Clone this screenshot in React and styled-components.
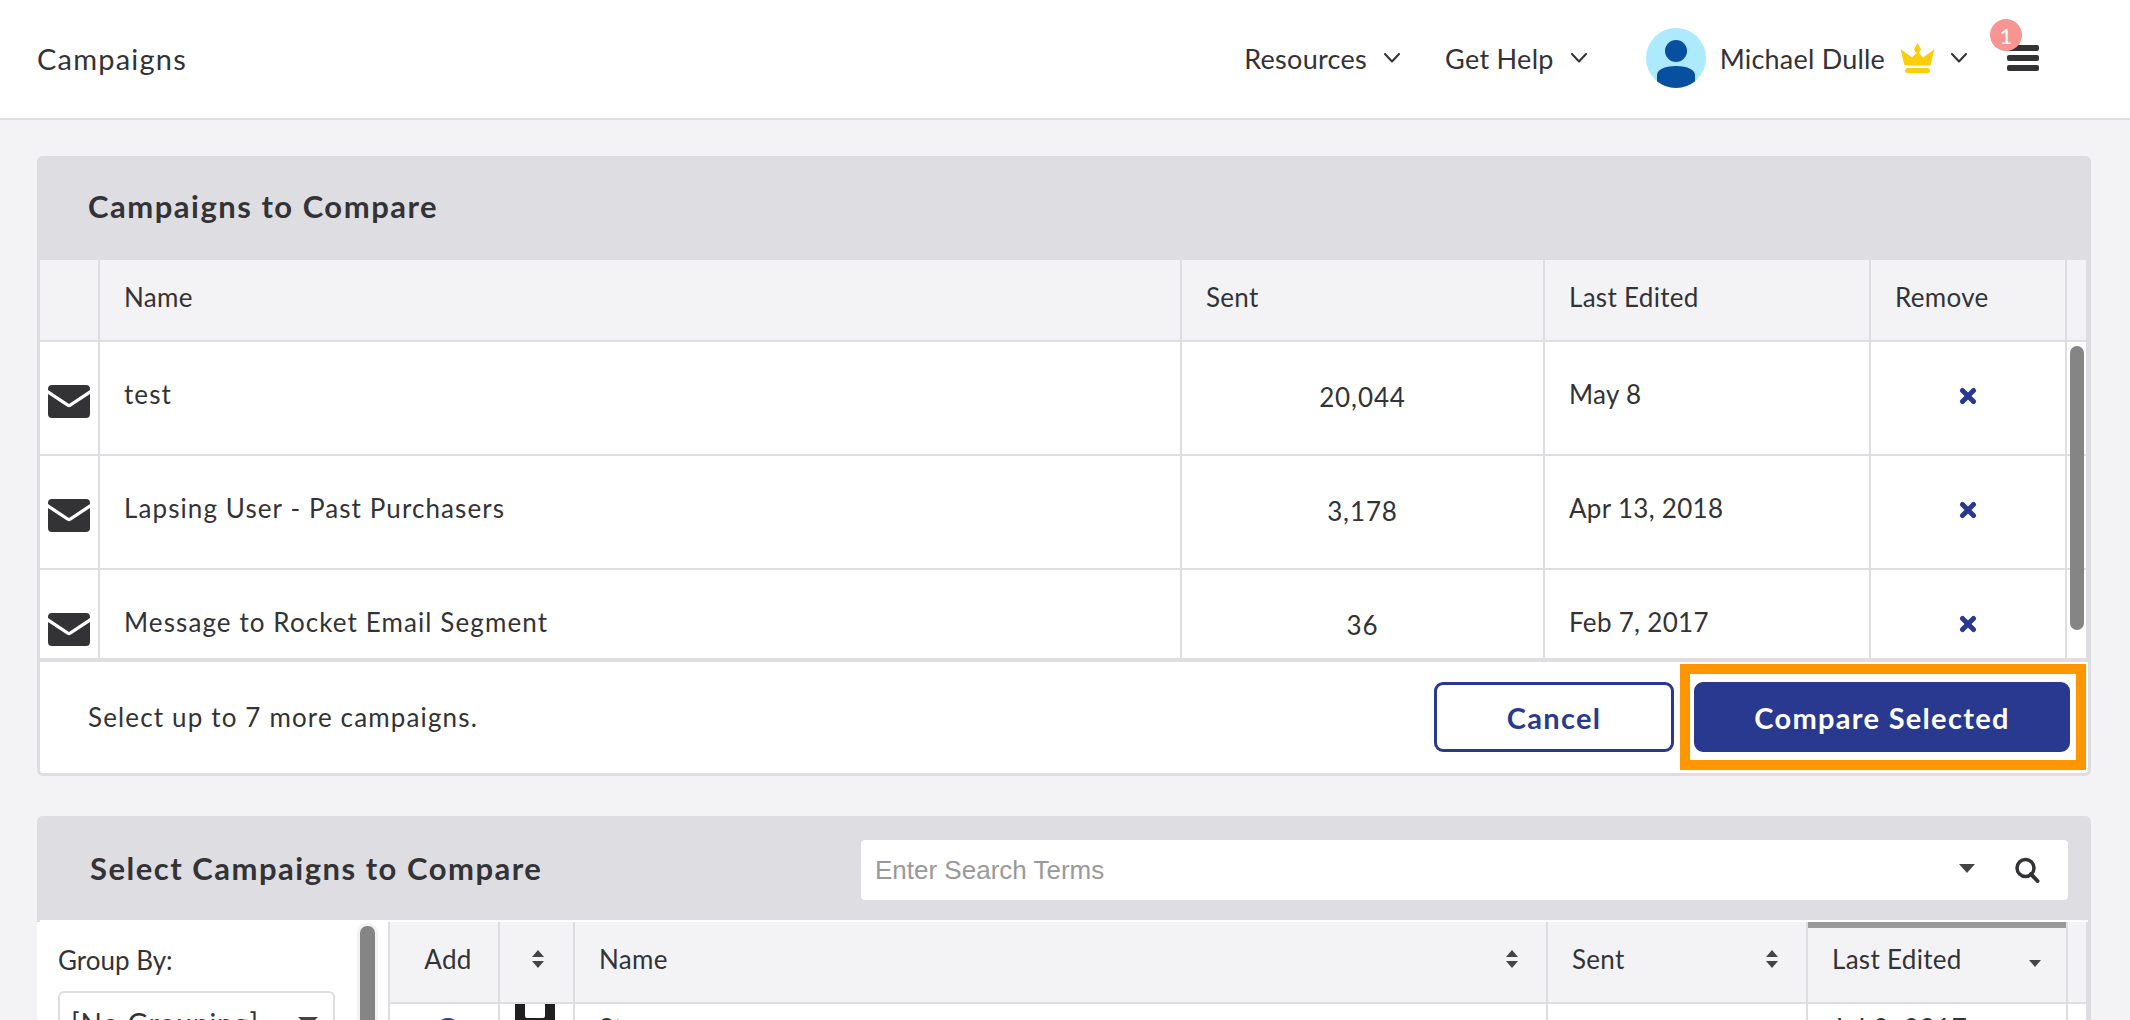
import React from "react";
import styled, { createGlobalStyle } from "styled-components";

const GlobalStyle = createGlobalStyle`
  html, body {
    margin: 0;
    padding: 0;
    background: #f3f3f6;
  }
  * {
    box-sizing: border-box;
  }
`;

const NAVY = "#29398f";
const LINE = "#dddde2";
const INK = "#333336";
const FONT = `Lato, "Open Sans", sans-serif`;

const CAMPAIGNS = [
  { name: "test", sent: "20,044", edited: "May 8" },
  { name: "Lapsing User - Past Purchasers", sent: "3,178", edited: "Apr 13, 2018" },
  { name: "Message to Rocket Email Segment", sent: "36", edited: "Feb 7, 2017" },
];

const Page = styled.div`
  width: 2130px;
  height: 1020px;
  overflow: hidden;
  background: #f3f3f6;
  font-family: ${FONT};
  color: ${INK};
`;

const TopBar = styled.header`
  height: 120px;
  background: #fff;
  border-bottom: 2px solid ${LINE};
  display: flex;
  align-items: center;
  padding: 0 91px 2px 37px;
`;

const AppTitle = styled.div`
  font-size: 29px;
  letter-spacing: 1.2px;
  flex: 1;
`;

const NavItem = styled.div`
  display: flex;
  align-items: center;
  gap: 17px;
  font-size: 27px;
  letter-spacing: 0.3px;
  margin-right: ${(p) => p.$after}px;
`;

const UserName = styled.span`
  margin: 0 15px 0 14px;
  font-size: 27px;
  letter-spacing: 0.2px;
`;

const ChevronSvg = styled.svg`
  flex: none;
  margin-left: ${(p) => p.$left || 0}px;
`;

const Menu = styled.div`
  position: relative;
  width: 32px;
  margin-left: 40px;
  display: flex;
  flex-direction: column;
  gap: 4px;
`;

const MenuBar = styled.span`
  height: 6px;
  border-radius: 2px;
  background: ${INK};
`;

const Badge = styled.span`
  position: absolute;
  left: -17px;
  top: -26px;
  width: 32px;
  height: 32px;
  border-radius: 50%;
  background: #f89593;
  color: #fff;
  font-size: 22px;
  display: flex;
  align-items: center;
  justify-content: center;
`;

const Content = styled.main`
  padding: 36px 39px 0 37px;
  display: flex;
  flex-direction: column;
  gap: 40px;
`;

const Panel = styled.section`
  position: relative;
  background: #fff;
  border: 3px solid ${LINE};
  border-top: 0;
  border-radius: 6px;
`;

const PanelHead = styled.div`
  height: 104px;
  margin: 0 -3px;
  background: ${LINE};
  border-radius: 6px 6px 0 0;
  display: flex;
  align-items: center;
  padding-left: ${(p) => p.$left}px;
  padding-bottom: ${(p) => p.$lift || 0}px;
`;

const PanelTitle = styled.h2`
  margin: 0;
  font-size: 31px;
  font-weight: 700;
  letter-spacing: 1.5px;
  width: 771px;
  flex: none;
`;

const Grid = styled.div`
  display: grid;
  grid-template-columns: ${(p) => p.$cols};
  height: ${(p) => p.$height}px;
  background: ${(p) => (p.$head ? "#f3f3f6" : "#fff")};
  border-bottom: 2px solid ${LINE};
`;

const Cell = styled.div`
  position: relative;
  min-width: 0;
  display: flex;
  align-items: center;
  justify-content: ${(p) => (p.$center ? "center" : "flex-start")};
  padding: 0 ${(p) => (p.$center ? 0 : 24)}px ${(p) => (p.$head ? 6 : 0)}px;
  font-size: 26px;
  letter-spacing: ${(p) => (p.$head ? 0.3 : 0.9)}px;
  border-right: 2px solid ${LINE};
  white-space: nowrap;
  overflow: hidden;
`;

const TailCell = styled(Cell)`
  padding: 0;
`;

const LiftedText = styled.span`
  transform: translateY(-${(p) => p.$by}px);
`;

const CampaignName = styled(LiftedText)`
  letter-spacing: 1.1px;
`;

const EditedDate = styled(LiftedText)`
  letter-spacing: 0.3px;
`;

const Rows = styled.div`
  position: relative;
  height: 320px;
  overflow: hidden;
  border-bottom: 4px solid ${LINE};
`;

const Scrollbar = styled.div`
  position: absolute;
  right: 4px;
  top: 4px;
  width: 14px;
  height: 284px;
  border-radius: 7px;
  background: #858585;
`;

const EnvelopeCell = styled(Cell)`
  padding: 6px 0 0 8px;
`;

const Footer = styled.div`
  height: 111px;
  display: flex;
  align-items: center;
  justify-content: space-between;
  padding: 0 18px 1px 48px;
  font-size: 26px;
  letter-spacing: 1.15px;
`;

const Actions = styled.div`
  display: flex;
  gap: 20px;
`;

const Button = styled.button`
  height: 70px;
  width: ${(p) => (p.$primary ? 376 : 240)}px;
  border: 3px solid ${NAVY};
  border-radius: 9px;
  background: ${(p) => (p.$primary ? NAVY : "#fff")};
  color: ${(p) => (p.$primary ? "#fff" : NAVY)};
  font-family: ${FONT};
  font-size: 29px;
  font-weight: 700;
  letter-spacing: 1.3px;
`;

const Highlight = styled.div`
  position: absolute;
  left: 1640px;
  top: 508px;
  width: 406px;
  height: 106px;
  border: 10px solid #ff9500;
  pointer-events: none;
`;

const SearchBox = styled.div`
  width: 1207px;
  height: 60px;
  margin-top: 4px;
  flex: none;
  background: #fff;
  border-radius: 4px;
  display: flex;
  align-items: center;
  padding: 0 28px 0 14px;
`;

const Placeholder = styled.span`
  flex: 1;
  font-family: "Liberation Sans", Arial, sans-serif;
  font-size: 26px;
  color: #999;
`;

const SearchCaret = styled.span`
  width: 0;
  height: 0;
  border-left: 8px solid transparent;
  border-right: 8px solid transparent;
  border-top: 9px solid #444;
  margin: 0 39px 4px 0;
`;

const PickerBody = styled.div`
  position: relative;
  display: flex;
  background: #fff;
  margin: 2px 0 0 -3px;
  height: 100px;
`;

const Sidebar = styled.aside`
  position: relative;
  width: 351px;
  flex: none;
  padding: 21px 0 0 21px;
  font-size: 26px;
`;

const SideScroll = styled.div`
  position: absolute;
  right: 13px;
  top: 4px;
  width: 15px;
  height: 100px;
  border-radius: 7px;
  background: #858585;
  box-shadow: 0 0 0 3px #f3f3f6;
`;

const GroupLabel = styled.div`
  height: 34px;
  line-height: 34px;
`;

const GroupSelect = styled.div`
  width: 277px;
  height: 60px;
  margin-top: 14px;
  border: 2px solid ${LINE};
  border-radius: 6px;
  padding: 13px 0 0 11px;
  font-size: 28px;
  letter-spacing: 1px;
  display: flex;
  justify-content: space-between;
`;

const GroupCaret = styled.span`
  width: 0;
  height: 0;
  margin: 11px 15px 0 0;
  border-left: 10px solid transparent;
  border-right: 10px solid transparent;
  border-top: 10px solid #444;
`;

const PickerTable = styled.div`
  flex: 1;
  min-width: 0;
  border-left: 2px solid ${LINE};
`;

const HeadLabel = styled.span`
  flex: 1;
`;

const SortedBar = styled.span`
  position: absolute;
  left: 0;
  right: 0;
  top: 0;
  height: 6px;
  background: #999;
`;

const AddHead = styled(Cell)`
  padding-left: 8px;
`;

const OrderHead = styled(Cell)`
  padding-left: 3px;
`;

const SortSlot = styled.span`
  display: flex;
  margin-right: 3px;
`;

const RowCell = styled(Cell)`
  align-items: flex-start;
  padding-top: 8px;
`;

const AddRowCell = styled(RowCell)`
  padding-left: 8px;
`;

const AddDot = styled.span`
  width: 26px;
  height: 26px;
  border-radius: 50%;
  background: ${NAVY};
  margin-top: 6px;
`;

const Thumb = styled.span`
  position: absolute;
  left: 15px;
  top: 0;
  width: 40px;
  height: 60px;
  background: #1f1f1f;
  &::before {
    content: "";
    position: absolute;
    left: 10px;
    top: 0;
    width: 20px;
    height: 14px;
    border-radius: 0 0 2px 2px;
    background: #fff;
  }
`;

const SortDownSvg = styled.svg`
  flex: none;
  margin-top: 8px;
`;

const Chevron = ({ left }) => (
  <ChevronSvg $left={left} width="16" height="10" viewBox="0 0 16 10" fill="none">
    <path d="M1 1 L8 8.500 L15 1" stroke={INK} strokeWidth="2" strokeLinecap="round" strokeLinejoin="round" />
  </ChevronSvg>
);

const Envelope = () => (
  <svg width="42" height="33" viewBox="0 0 42 33">
    <path
      fill={INK}
      d="M0 4 Q0 0 4 0 H38 Q42 0 42 4 V5 L21 19 L0 5 Z M0 9 L19 21.500 Q21 23 23 21.500 L42 9 V29 Q42 33 38 33 H4 Q0 33 0 29 Z"
    />
  </svg>
);

const RemoveMark = () => (
  <svg width="18" height="18" viewBox="0 0 18 18">
    <path d="M3.500 3.500 L14.500 14.500 M14.500 3.500 L3.500 14.500" stroke={NAVY} strokeWidth="5" strokeLinecap="round" />
  </svg>
);

const Crown = () => (
  <svg width="35" height="30" viewBox="0 0 35 30">
    <path
      fill="#fcce0a"
      d="M17.500 0 L21 6.500 L18.800 10 L23 14.500 L34.500 6 L30.500 22.500 H4.500 L0.500 6 L12 14.500 L16.200 10 L14 6.500 Z"
    />
    <rect x="5" y="25" width="25" height="5" rx="2.500" fill="#fcce0a" />
  </svg>
);

const Avatar = () => (
  <svg width="60" height="60" viewBox="0 0 60 60">
    <circle cx="30" cy="30" r="30" fill="#aeeafd" />
    <circle cx="30" cy="23" r="11" fill="#07509f" />
    <path d="M11 47 C11 42 18 38 30 38 S49 42 49 47 V53.200 A30 30 0 0 1 11 53.200 Z" fill="#07509f" />
  </svg>
);

const SortArrows = () => (
  <svg width="14" height="20" viewBox="0 0 14 20">
    <path d="M7 1 L13 8 H1 Z M7 19 L1 12 H13 Z" fill="#444" />
  </svg>
);

const SortDown = () => (
  <SortDownSvg width="14" height="8" viewBox="0 0 14 8">
    <path d="M1 1 H13 L7 8 Z" fill="#444" />
  </SortDownSvg>
);

const SearchIcon = () => (
  <svg width="26" height="26" viewBox="0 0 26 26" fill="none" stroke={INK}>
    <circle cx="11.500" cy="11" r="8.500" strokeWidth="3.500" />
    <path d="M17 17 L23.500 24" strokeWidth="4" strokeLinecap="round" />
  </svg>
);

const COMPARE_COLS = "60px 1082px 363px 326px 196px 1fr";
const PICKER_COLS = "110px 75px 973px 260px 260px 1fr";

const CompareHead = () => (
  <Grid $head $cols={COMPARE_COLS} $height={82}>
    <Cell $head />
    <Cell $head>Name</Cell>
    <Cell $head>Sent</Cell>
    <Cell $head>Last Edited</Cell>
    <Cell $head>Remove</Cell>
    <TailCell />
  </Grid>
);

const CampaignRow = ({ campaign }) => (
  <Grid $cols={COMPARE_COLS} $height={114}>
    <EnvelopeCell>
      <Envelope />
    </EnvelopeCell>
    <Cell><CampaignName $by={4}>{campaign.name}</CampaignName></Cell>
    <Cell $center><LiftedText $by={1}>{campaign.sent}</LiftedText></Cell>
    <Cell><EditedDate $by={4}>{campaign.edited}</EditedDate></Cell>
    <Cell $center><LiftedText $by={3}><RemoveMark /></LiftedText></Cell>
    <TailCell />
  </Grid>
);

const App = () => (
  <Page>
    <GlobalStyle />
    <TopBar>
      <AppTitle>Campaigns</AppTitle>
      <NavItem $after={45}>
        Resources <Chevron />
      </NavItem>
      <NavItem $after={59}>
        Get Help <Chevron />
      </NavItem>
      <Avatar />
      <UserName>Michael Dulle</UserName>
      <Crown />
      <Chevron left={16} />
      <Menu>
        <Badge>1</Badge>
        <MenuBar />
        <MenuBar />
        <MenuBar />
      </Menu>
    </TopBar>
    <Content>
      <Panel>
        <PanelHead $left={51} $lift={4}>
          <PanelTitle>Campaigns to Compare</PanelTitle>
        </PanelHead>
        <CompareHead />
        <Rows>
          {CAMPAIGNS.map((c) => (
            <CampaignRow key={c.name} campaign={c} />
          ))}
          <Scrollbar />
        </Rows>
        <Footer>
          <span>Select up to 7 more campaigns.</span>
          <Actions>
            <Button>Cancel</Button>
            <Button $primary>Compare Selected</Button>
          </Actions>
        </Footer>
        <Highlight />
      </Panel>
      <Panel>
        <PanelHead $left={53}>
          <PanelTitle>Select Campaigns to Compare</PanelTitle>
          <SearchBox>
            <Placeholder>Enter Search Terms</Placeholder>
            <SearchCaret />
            <SearchIcon />
          </SearchBox>
        </PanelHead>
        <PickerBody>
          <Sidebar>
            <GroupLabel>Group By:</GroupLabel>
            <GroupSelect>
              [No Grouping]
              <GroupCaret />
            </GroupSelect>
            <SideScroll />
          </Sidebar>
          <PickerTable>
            <Grid $head $cols={PICKER_COLS} $height={82}>
              <AddHead $head $center>Add</AddHead>
              <OrderHead $head $center><SortArrows /></OrderHead>
              <Cell $head><HeadLabel>Name</HeadLabel><SortSlot><SortArrows /></SortSlot></Cell>
              <Cell $head><HeadLabel>Sent</HeadLabel><SortSlot><SortArrows /></SortSlot></Cell>
              <Cell $head>
                <SortedBar />
                <HeadLabel>Last Edited</HeadLabel>
                <SortDown />
              </Cell>
              <TailCell />
            </Grid>
            <Grid $cols={PICKER_COLS} $height={80}>
              <AddRowCell $center><AddDot /></AddRowCell>
              <RowCell $center><Thumb /></RowCell>
              <RowCell>St</RowCell>
              <RowCell />
              <RowCell>Jul 8, 2017</RowCell>
              <TailCell />
            </Grid>
          </PickerTable>
        </PickerBody>
      </Panel>
    </Content>
  </Page>
);

export default App;
